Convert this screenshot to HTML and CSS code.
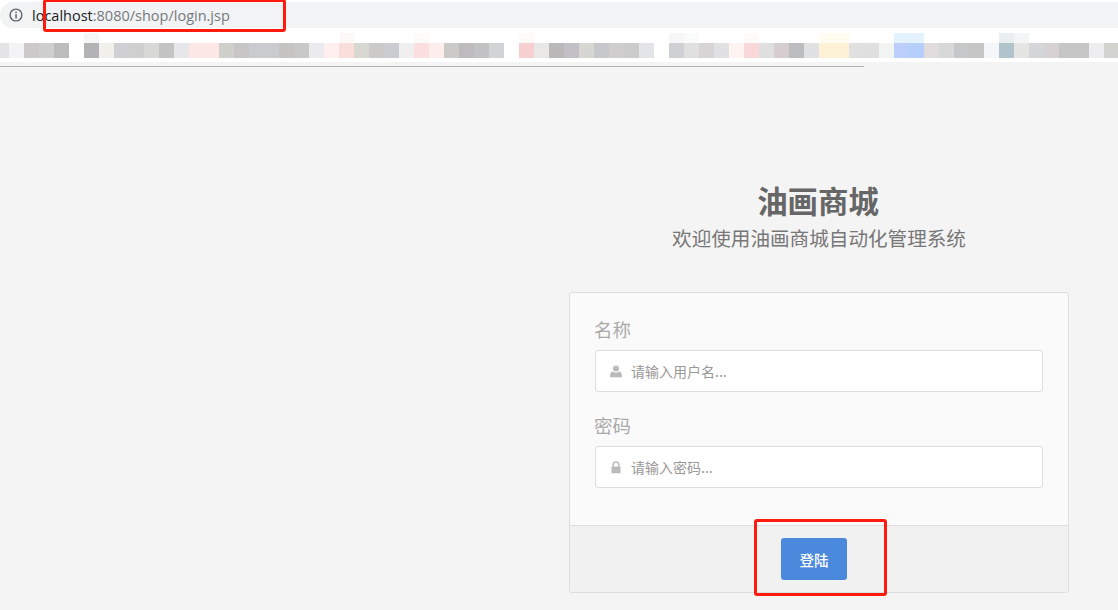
FILE: index.html
```html
<!DOCTYPE html>
<html lang="zh">
<head>
<meta charset="utf-8">
<title>油画商城</title>
<link rel="stylesheet" href="styles.css">
</head>
<body>
<header class="chrome">
  <div class="address">
    <svg class="info" viewBox="0 0 14 14" width="14" height="14" aria-hidden="true">
      <circle cx="7" cy="7" r="5.9" fill="none" stroke="#5f6368" stroke-width="1.4"/>
      <rect x="6.3" y="6.2" width="1.5" height="4.2" fill="#5f6368"/>
      <rect x="6.3" y="3.6" width="1.5" height="1.5" fill="#5f6368"/>
    </svg>
    <span class="url"><span class="host">localhost</span>:8080/shop/login.jsp</span>
  </div>
  <div class="blur-fade"></div>
  <div class="blur-row"></div>
  <div class="blur-tail"></div>
  <div class="rule"></div>
</header>
<main class="page">
  <section class="login">
    <div class="brand">
      <h1 class="brand-title">油画商城</h1>
      <p class="brand-sub">欢迎使用油画商城自动化管理系统</p>
    </div>
    <form class="panel">
      <div class="panel-body">
        <div class="field">
          <label class="field-label" for="name">名称</label>
          <div class="input-box">
            <svg class="field-icon" viewBox="0 0 12 13" width="12" height="13" aria-hidden="true">
              <circle cx="6" cy="3.4" r="3" fill="#bbb"/>
              <path d="M0.6 12.2c-.5 0-.6-.4-.6-.8C0 9 .8 6.8 2.8 6.6c.8.7 1.9 1.1 3.2 1.1s2.400-.4 3.200-1.100C11.200 6.800 12 9 12 11.400c0 .4-.1.800-.6.800z" fill="#bbb"/>
            </svg>
            <input class="input" id="name" type="text" placeholder="请输入用户名...">
          </div>
        </div>
        <div class="field">
          <label class="field-label" for="pwd">密码</label>
          <div class="input-box">
            <svg class="field-icon" viewBox="0 0 12 13" width="12" height="13" aria-hidden="true">
              <path d="M3.200 5.500V3.800C3.200 2.100 4.400 1 6 1s2.800 1.100 2.800 2.800v1.700" fill="none" stroke="#bbb" stroke-width="1.600"/>
              <rect x="1.500" y="5.500" width="9" height="6.800" rx=".8" fill="#bbb"/>
            </svg>
            <input class="input" id="pwd" type="password" placeholder="请输入密码...">
          </div>
        </div>
      </div>
      <div class="panel-foot">
        <button class="btn" type="button">登陆</button>
      </div>
    </form>
  </section>
</main>
<div class="mark mark-url"></div>
<div class="mark mark-btn"></div>
</body>
</html>
```
FILE: styles.css
```css
* { box-sizing: border-box; }
html, body { margin: 0; height: 100%; }
body {
  position: relative;
  height: 610px;
  overflow: hidden;
  background: #f4f4f4;
  font-family: "Noto Sans CJK SC", "Liberation Sans", sans-serif;
}
.chrome { padding-top: 2px; height: 67px; background: linear-gradient(#fff 0 62px, #f4f4f4 62px); }
.address {
  display: flex;
  align-items: center;
  height: 26px;
  padding-left: 9px;
  gap: 9px;
  background: #f1f3f4;
  border-radius: 13px 0 0 13px;
}
.info { flex: none; }
.url {
  font-family: "Open Sans", "Liberation Sans", sans-serif;
  font-size: 14.5px;
  color: #767a7e;
}
.host { color: #202124; }
.blur-fade {
  height: 15px;
  background:
    linear-gradient(#fff 0 5px, transparent 5px),
    linear-gradient(90deg, #fff 0 84px, #f6f6f6 84px 99px, #fff 99px 340px, #fdf8f8 340px 354px, #fff 354px 414px, #fefafa 414px 429px, #fff 429px 519px, #fefafa 519px 534px, #fff 534px 669px, #f6f6f6 669px 684px, #fafcfb 684px 699px, #fff 699px 744px, #fefafa 744px 759px, #fff 759px 819px, #fefbf0 819px 849px, #fff 849px 894px, #e4f2fd 894px 924px, #fff 924px 999px, #e9f0ef 999px 1014px, #f3f5f7 1014px 1029px, #fff 1029px);
}
.blur-row {
  height: 15px;
  background: linear-gradient(90deg,
    #e4e3e6 0 9px, #f3f2f4 9px 24px, #cbc9ca 24px 39px, #cfcfcf 39px 54px, #bcbcbc 54px 69px, #fff 69px 84px,
    #b3b3b5 84px 99px, #f1f0ec 99px 114px, #cfcfd4 114px 129px, #cfcfcf 129px 144px, #d8d8d6 144px 159px,
    #c4c4c4 159px 174px, #e6e7e9 174px 189px, #fde6e6 189px 219px, #cfcfcb 219px 234px, #c7c5c5 234px 249px,
    #cacbcf 249px 279px, #c5c4c2 279px 294px, #c9c8c9 294px 309px, #ebebee 309px 324px, #fdf0ef 324px 339px,
    #f9dedc 339px 354px, #d8d8d3 354px 369px, #cbcac8 369px 384px, #cbccd1 384px 399px, #efefef 399px 414px,
    #fbdfe0 414px 429px, #fdeeee 429px 444px, #cbcac8 444px 459px, #bdbbbd 459px 474px, #c2c2c4 474px 489px,
    #d2d3d5 489px 504px, #fff 504px 519px, #f8cfd0 519px 534px, #e9e8e6 534px 549px, #bab8b8 549px 564px,
    #c2c0c6 564px 579px, #d6d6d3 579px 594px, #c5c7ca 594px 609px, #cfcdce 609px 624px, #cbcbcb 624px 639px,
    #e3e4e7 639px 654px, #fff 654px 669px, #cfd0d3 669px 684px, #e0e0e0 684px 699px, #d6d4d5 699px 714px,
    #e1e1e4 714px 729px, #fff4f1 729px 744px, #fad7d8 744px 759px, #dfdfdf 759px 774px, #d5cdd0 774px 789px,
    #bcbdbf 789px 804px, #e0e1e3 804px 819px, #fdf2d5 819px 849px, #e0e0e0 849px 864px, #dfdfdf 864px 879px,
    #f2f4f2 879px 894px, #bccefa 894px 909px, #b6cefa 909px 924px, #e0dcdd 924px 939px, #d8d8d8 939px 954px,
    #c6c7c9 954px 969px, #c6c6c6 969px 984px, #f5f6f8 984px 999px, #b1c4cc 999px 1014px, #e5e5e3 1014px 1029px,
    #d5d6d8 1029px 1044px, #d6d2d4 1044px 1059px, #c6c6c6 1059px 1089px, #eeeef0 1089px 1104px, #d2d2ce 1104px);
}
.blur-tail { height: 8px; }
.rule { height: 1px; width: 864px; background: #b2b2b2; }

.page { display: flex; justify-content: flex-end; padding-right: 49px; }
.login { width: 500px; }
.brand { text-align: center; color: #666; padding-top: 111px; height: 225px; }
.brand-title { margin: 0 2px 0 0; font-size: 30.4px; line-height: 44px; font-weight: 700; color: #666; }
.brand-sub { margin: 1px 0 0; font-size: 19.6px; line-height: 30px; color: #777; }

.panel {
  height: 301px;
  display: flex;
  flex-direction: column;
  background: #fafafa;
  border: 1px solid #dedede;
  border-radius: 3px;
}
.panel-body { flex: 1; padding: 21px 25px 0; display: flex; flex-direction: column; gap: 18px; }
.field-label { display: block; margin-left: -1px; font-size: 18.5px; line-height: 30px; height: 36px; color: #aaa; }
.input-box {
  display: flex;
  align-items: center;
  height: 42px;
  padding-left: 14px;
  gap: 9px;
  background: #fff;
  border: 1px solid #ddd;
  border-radius: 3px;
}
.field-icon { flex: none; }
.input {
  flex: 1;
  min-width: 0;
  border: 0;
  padding: 0 2px 1px 0;
  outline: 0;
  background: transparent;
  font: 14px "Noto Sans CJK SC", "Liberation Sans", sans-serif;
  color: #555;
}
.input::placeholder { color: #999; opacity: 1; }
.panel-foot {
  height: 67px;
  display: flex;
  align-items: center;
  justify-content: center;
  background: #f1f1f1;
  border-top: 1px solid #dedede;
  padding-right: 10px;
}
.btn {
  width: 66px;
  height: 42px;
  border: 0;
  border-radius: 3px;
  background: #4a89dc;
  color: #fff;
  font: 500 14.5px "Noto Sans CJK SC", "Liberation Sans", sans-serif;
}
.mark { position: absolute; border: 3px solid #ff1a0f; border-radius: 3px; }
.mark-url { left: 43px; top: -1px; width: 243px; height: 33px; }
.mark-btn { left: 754px; top: 519px; width: 133px; height: 77px; }
```
